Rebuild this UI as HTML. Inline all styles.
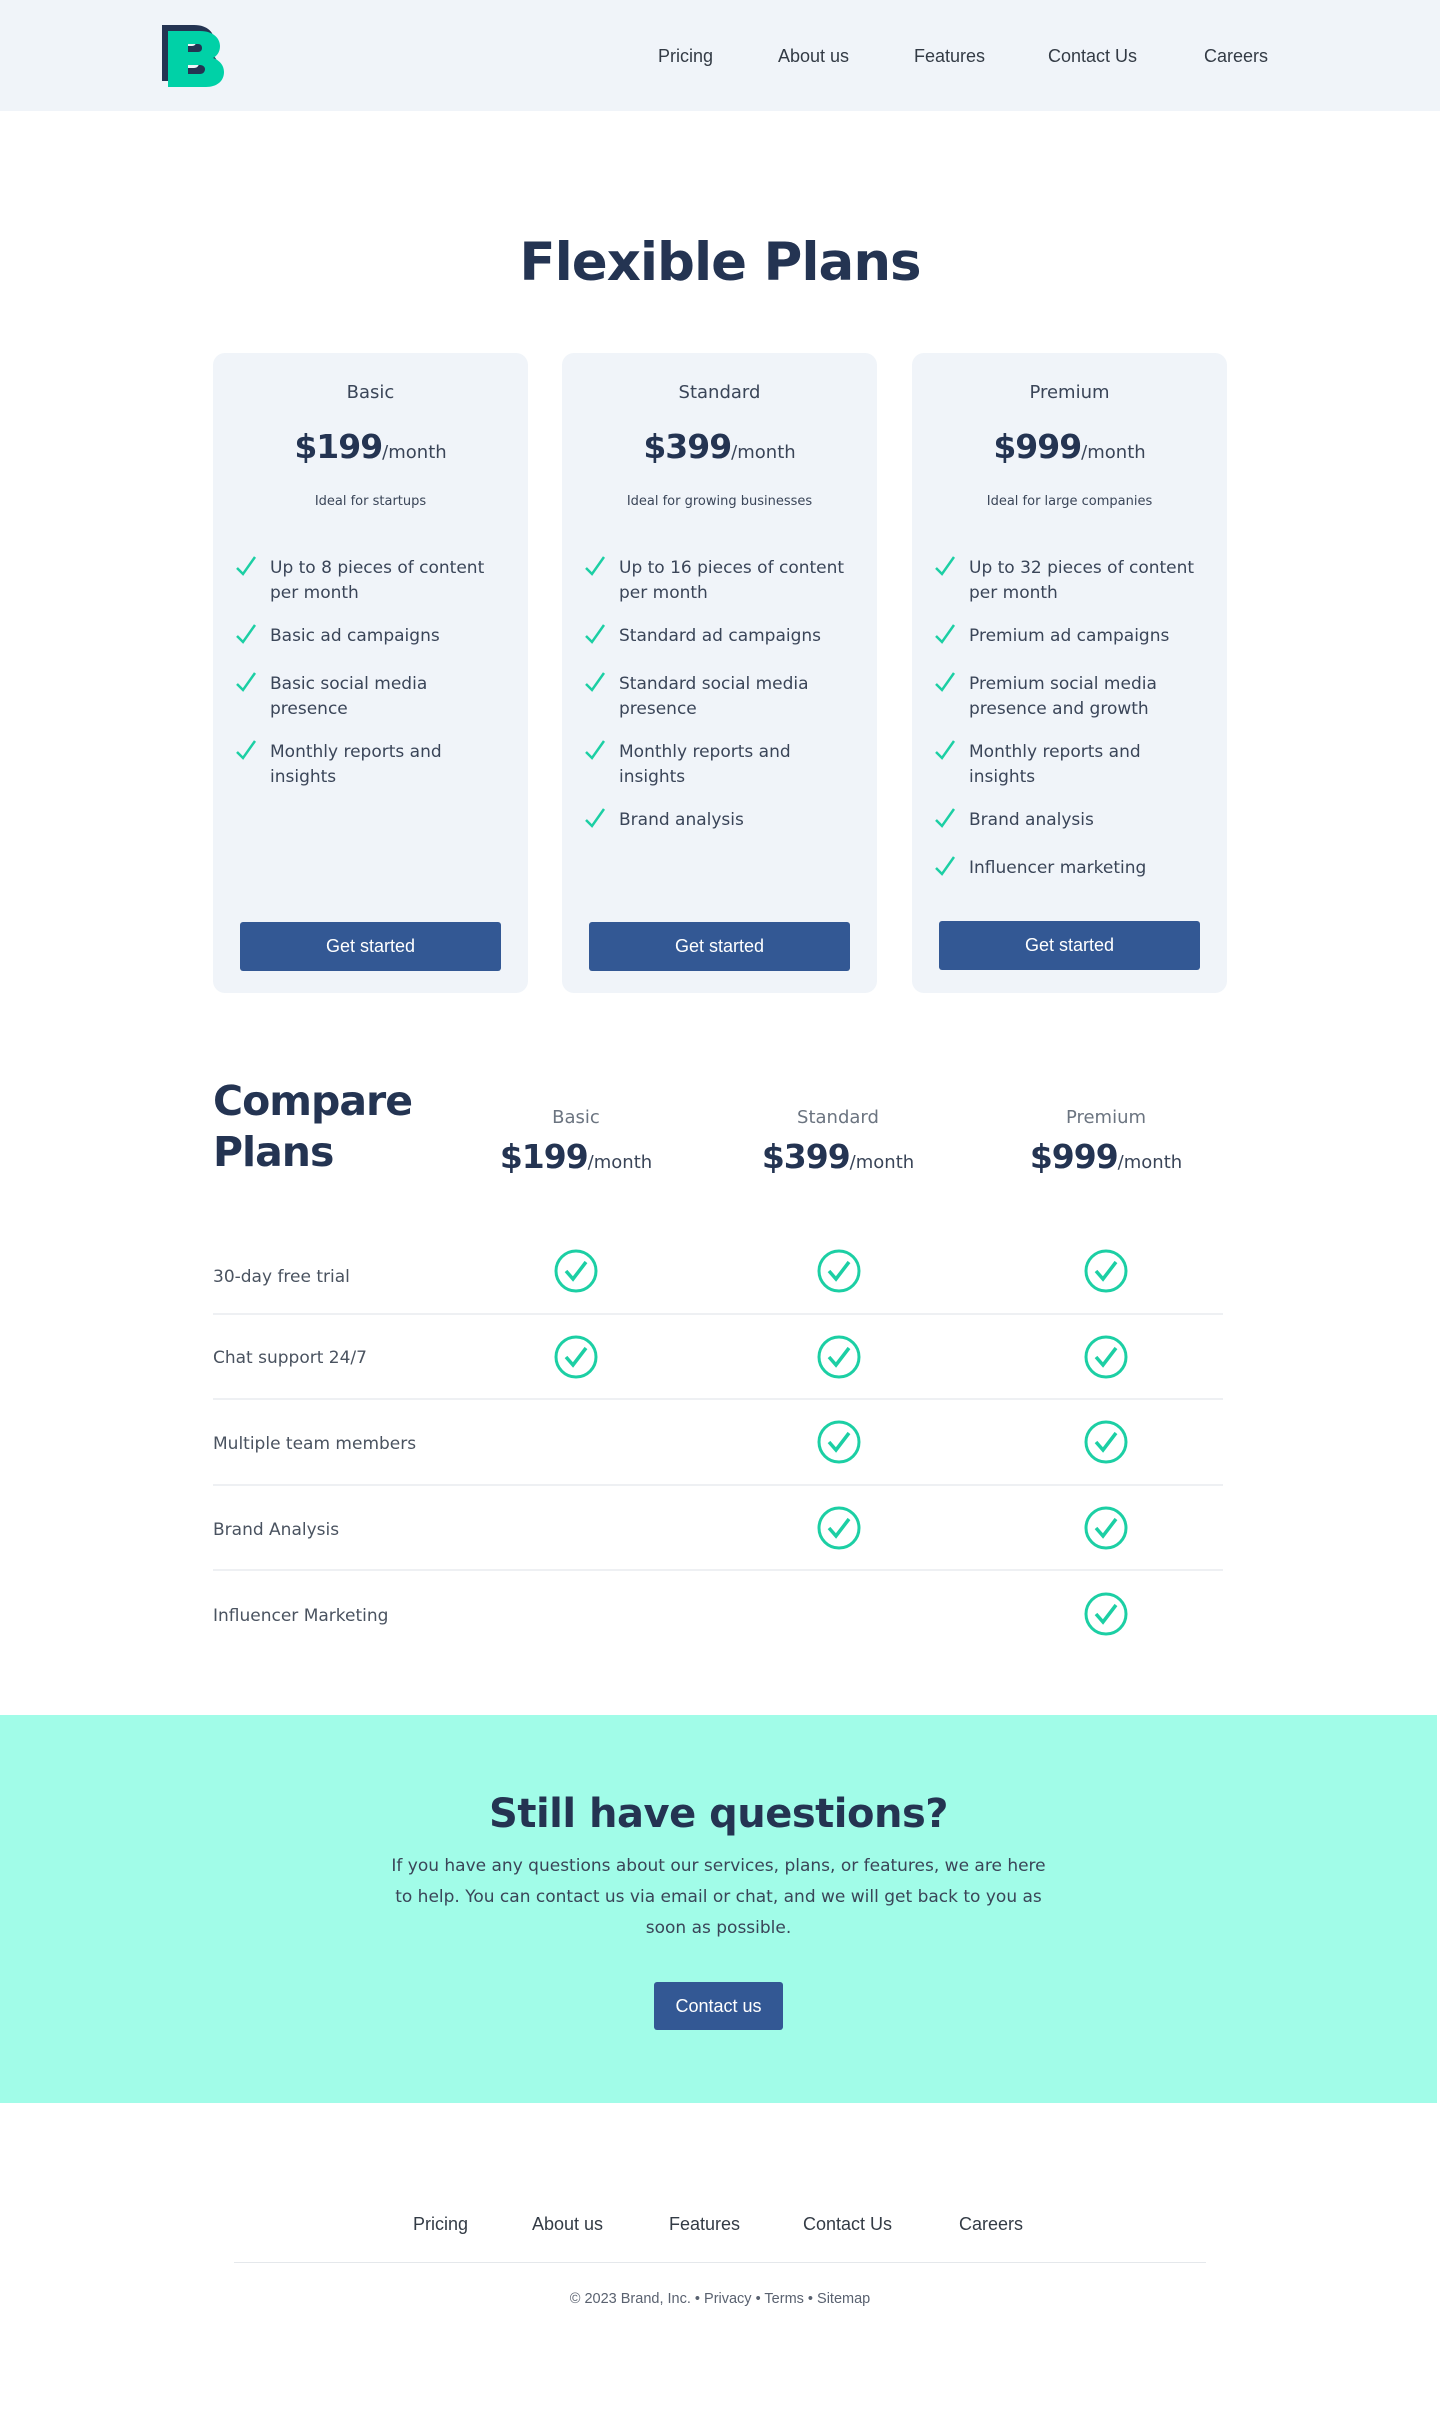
<!DOCTYPE html>
<html><head><meta charset="utf-8"><style>
*{margin:0;padding:0;box-sizing:border-box}
body{width:1440px;height:2416px;background:#fff;position:relative;font-family:"DejaVu Sans","Liberation Sans",sans-serif;color:#243452;overflow:hidden}
.a{position:absolute}
.nav{font-family:"Liberation Sans",sans-serif;font-size:18px;color:#333b45}
.card{position:absolute;top:353px;width:315px;height:640px;background:#f0f4f9;border-radius:12px}
.card .t{position:absolute;top:29px;width:100%;text-align:center;font-size:18px;color:#3a4558}
.card .p{position:absolute;top:74px;width:100%;text-align:center;font-size:33px;font-weight:bold;color:#243452;letter-spacing:-1px}
.card .p span{font-size:18px;font-weight:normal;letter-spacing:0;color:#3a4558}
.card .d{position:absolute;top:141px;width:100%;text-align:center;font-size:13px;color:#3a4558}
.card ul{list-style:none;position:absolute;left:0;top:203px;width:100%}
.card li{position:relative;padding-left:57px;padding-right:18px;font-size:17px;line-height:25px;color:#3a4558;margin-bottom:18px;min-height:30px}
.card li svg{position:absolute;left:22px;top:0px}
.btn{position:absolute;left:27px;top:569px;width:261px;height:49px;background:#335894;border-radius:3px;color:#fff;font-family:"Liberation Sans",sans-serif;font-size:18px;text-align:center;line-height:49px}
.ch{font-size:18px;color:#6b7480;text-align:center;width:260px}
.cp{font-size:33px;font-weight:bold;text-align:center;width:300px;letter-spacing:-1px}
.cp span{font-size:18px;font-weight:normal;letter-spacing:0;color:#3a4558}
.row{font-size:17px;color:#4a5360;left:213px}
.ln{left:213px;width:1010px;height:2px;background:#eef0f3}
</style></head><body>
<div class="a" style="left:0;top:0;width:1440px;height:111px;background:#f0f4f9"></div>
<svg class="a" style="left:160px;top:24px" width="70" height="66" viewBox="0 0 70 66">
<defs><path id="B" fill-rule="evenodd" d="M0 0H32C46 0 52 8 52 15C52 21 49 25 45 27C51 29 56 34 56 41C56 50 49 56 38 56H0ZM20 13H30C33 13 34 15 34 17C34 19 33 21 30 21H20ZM20 34H32C35 34 37 36 37 38C37 41 35 43 32 43H20Z"/></defs>
<use href="#B" x="2" y="1" fill="#243452"/><use href="#B" x="8" y="7" fill="#00d1a7"/></svg>
<div class="a nav" style="left:658px;top:46px">Pricing</div>
<div class="a nav" style="left:778px;top:46px">About us</div>
<div class="a nav" style="left:914px;top:46px">Features</div>
<div class="a nav" style="left:1048px;top:46px">Contact Us</div>
<div class="a nav" style="left:1204px;top:46px">Careers</div>

<div class="a" style="left:0;top:232px;width:1440px;text-align:center;font-size:53px;font-weight:bold;letter-spacing:-1px;color:#243452">Flexible Plans</div>

<div class="card" style="left:213px"><div class="t">Basic</div><div class="p">$199<span>/month</span></div><div class="d">Ideal for startups</div>
<ul><li><svg width="22" height="22"><path d="M2 12l6 6L20 1" stroke="#1ccfa4" stroke-width="2.5" fill="none"/></svg>Up to 8 pieces of content per month</li><li><svg width="22" height="22"><path d="M2 12l6 6L20 1" stroke="#1ccfa4" stroke-width="2.5" fill="none"/></svg>Basic ad campaigns</li><li><svg width="22" height="22"><path d="M2 12l6 6L20 1" stroke="#1ccfa4" stroke-width="2.5" fill="none"/></svg>Basic social media presence</li><li><svg width="22" height="22"><path d="M2 12l6 6L20 1" stroke="#1ccfa4" stroke-width="2.5" fill="none"/></svg>Monthly reports and insights</li></ul>
<div class="btn">Get started</div></div>

<div class="card" style="left:562px"><div class="t">Standard</div><div class="p">$399<span>/month</span></div><div class="d">Ideal for growing businesses</div>
<ul><li><svg width="22" height="22"><path d="M2 12l6 6L20 1" stroke="#1ccfa4" stroke-width="2.5" fill="none"/></svg>Up to 16 pieces of content per month</li><li><svg width="22" height="22"><path d="M2 12l6 6L20 1" stroke="#1ccfa4" stroke-width="2.5" fill="none"/></svg>Standard ad campaigns</li><li><svg width="22" height="22"><path d="M2 12l6 6L20 1" stroke="#1ccfa4" stroke-width="2.5" fill="none"/></svg>Standard social media presence</li><li><svg width="22" height="22"><path d="M2 12l6 6L20 1" stroke="#1ccfa4" stroke-width="2.5" fill="none"/></svg>Monthly reports and insights</li><li><svg width="22" height="22"><path d="M2 12l6 6L20 1" stroke="#1ccfa4" stroke-width="2.5" fill="none"/></svg>Brand analysis</li></ul>
<div class="btn">Get started</div></div>

<div class="card" style="left:912px"><div class="t">Premium</div><div class="p">$999<span>/month</span></div><div class="d">Ideal for large companies</div>
<ul><li><svg width="22" height="22"><path d="M2 12l6 6L20 1" stroke="#1ccfa4" stroke-width="2.5" fill="none"/></svg>Up to 32 pieces of content per month</li><li><svg width="22" height="22"><path d="M2 12l6 6L20 1" stroke="#1ccfa4" stroke-width="2.5" fill="none"/></svg>Premium ad campaigns</li><li><svg width="22" height="22"><path d="M2 12l6 6L20 1" stroke="#1ccfa4" stroke-width="2.5" fill="none"/></svg>Premium social media presence and growth</li><li><svg width="22" height="22"><path d="M2 12l6 6L20 1" stroke="#1ccfa4" stroke-width="2.5" fill="none"/></svg>Monthly reports and insights</li><li><svg width="22" height="22"><path d="M2 12l6 6L20 1" stroke="#1ccfa4" stroke-width="2.5" fill="none"/></svg>Brand analysis</li><li><svg width="22" height="22"><path d="M2 12l6 6L20 1" stroke="#1ccfa4" stroke-width="2.5" fill="none"/></svg>Influencer marketing</li></ul>
<div class="btn" style="top:568px">Get started</div></div>

<div class="a" style="left:213px;top:1076px;font-size:41px;font-weight:bold;line-height:51px;letter-spacing:-1px">Compare<br>Plans</div>
<div class="a ch" style="left:446px;top:1107px">Basic</div>
<div class="a ch" style="left:708px;top:1107px">Standard</div>
<div class="a ch" style="left:976px;top:1107px">Premium</div>
<div class="a cp" style="left:426px;top:1137px">$199<span>/month</span></div>
<div class="a cp" style="left:688px;top:1137px">$399<span>/month</span></div>
<div class="a cp" style="left:956px;top:1137px">$999<span>/month</span></div>

<div class="a row" style="top:1267px">30-day free trial</div>
<div class="a ln" style="top:1313px"></div>
<div class="a row" style="top:1348px">Chat support 24/7</div>
<div class="a ln" style="top:1398px"></div>
<div class="a row" style="top:1434px">Multiple team members</div>
<div class="a ln" style="top:1484px"></div>
<div class="a row" style="top:1520px">Brand Analysis</div>
<div class="a ln" style="top:1569px"></div>
<div class="a row" style="top:1606px">Influencer Marketing</div>

<svg class="a" style="left:0;top:0" width="1440" height="1700"><defs><g id="c"><circle cx="0" cy="0" r="20" stroke="#1ccfa4" stroke-width="3" fill="none"/><path d="M-10 0l7 8L10-9" stroke="#1ccfa4" stroke-width="3.5" fill="none"/></g></defs>
<use href="#c" x="576" y="1271"/><use href="#c" x="839" y="1271"/><use href="#c" x="1106" y="1271"/>
<use href="#c" x="576" y="1357"/><use href="#c" x="839" y="1357"/><use href="#c" x="1106" y="1357"/>
<use href="#c" x="839" y="1442"/><use href="#c" x="1106" y="1442"/>
<use href="#c" x="839" y="1528"/><use href="#c" x="1106" y="1528"/>
<use href="#c" x="1106" y="1614"/></svg>

<div class="a" style="left:0;top:1715px;width:1437px;height:388px;background:#a1fce8"></div>
<div class="a" style="left:0;top:1791px;width:1437px;text-align:center;font-size:40px;font-weight:bold;letter-spacing:-0.5px">Still have questions?</div>
<div class="a" style="left:378px;top:1851px;width:681px;text-align:center;font-size:17px;line-height:31px;color:#3a4558">If you have any questions about our services, plans, or features, we are here to&nbsp;help. You can contact us via email or chat, and we will get back to you as soon as possible.</div>
<div class="a" style="left:654px;top:1982px;width:129px;height:48px;background:#335894;border-radius:3px;color:#fff;font-family:'Liberation Sans',sans-serif;font-size:18px;text-align:center;line-height:48px">Contact us</div>

<div class="a nav" style="left:413px;top:2214px">Pricing</div>
<div class="a nav" style="left:532px;top:2214px">About us</div>
<div class="a nav" style="left:669px;top:2214px">Features</div>
<div class="a nav" style="left:803px;top:2214px">Contact Us</div>
<div class="a nav" style="left:959px;top:2214px">Careers</div>
<div class="a" style="left:234px;top:2262px;width:972px;height:1px;background:#e5e8ec"></div>
<div class="a" style="left:0;top:2291px;width:1440px;text-align:center;font-family:'Liberation Sans',sans-serif;font-size:14.5px;color:#5a6270">© 2023 Brand, Inc. • Privacy • Terms • Sitemap</div>
</body></html>
